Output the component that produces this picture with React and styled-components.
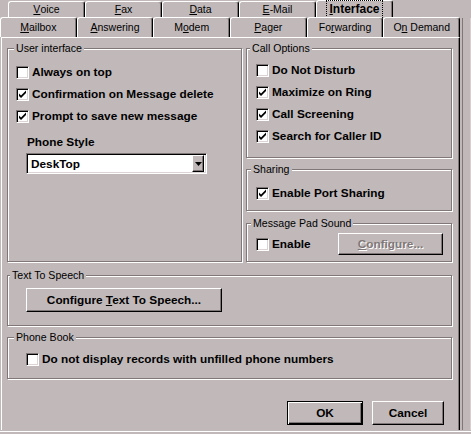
import React from 'react';
import styled, { createGlobalStyle } from 'styled-components';

const BG = '#c1b9b9';
const SHADE = '#807878';
const LIGHT = '#dcd4d4';

const GlobalStyle = createGlobalStyle`
  html, body {
    margin: 0;
    padding: 0;
    background: ${BG};
  }
  body {
    font-family: "Liberation Sans", Arial, sans-serif;
    color: #000;
  }
`;

const Page = styled.div`
  position: relative;
  width: 471px;
  height: 434px;
  overflow: hidden;
  background: ${BG};
`;

const Main = styled.div`
  display: flex;
  align-items: flex-start;
`;

const Dialog = styled.div`
  width: 460px;
`;

const SideStrip = styled.div`
  box-sizing: border-box;
  width: 9px;
  height: 412px;
  margin-top: 18px;
  margin-left: 2px;
  border-left: 1px solid ${SHADE};
  border-right: 1px solid #d8d0d0;
`;

const BottomLine = styled.div`
  height: 1px;
  margin-top: 1px;
  background: #fff;
`;

/* tabs */
const BackRow = styled.div`
  display: flex;
  align-items: flex-end;
  height: 18px;
  padding-left: 8px;
`;

const FrontRow = styled.div`
  display: flex;
  height: 20px;
  margin-top: -1px;
  position: relative;
`;

const Tab = styled.div`
  box-sizing: border-box;
  flex: ${p => (p.$w ? `0 0 ${p.$w}px` : '1 1 0')};
  height: ${p => p.$h}px;
  border-top: 1px solid #fff;
  border-left: 1px solid #fff;
  border-right: 1px solid #000;
  border-radius: 3px 3px 0 0;
  box-shadow: inset -1px 0 0 ${SHADE};
  background: ${BG};
  display: flex;
  align-items: center;
  justify-content: center;
  font-size: ${p => (p.$active ? '12px' : '10.5px')};
  font-weight: ${p => (p.$active ? 'bold' : 'normal')};
  padding-bottom: ${p => p.$pb || 0}px;
  white-space: pre;
`;

const Focus = styled.span`
  outline: 1px dotted #000;
  outline-offset: 1px;
  padding: 0 1px;
`;

const U = styled.span`
  text-decoration: underline;
  text-underline-offset: 1px;
`;

/* panel */
const Panel = styled.div`
  box-sizing: border-box;
  width: 459px;
  height: 393px;
  margin-left: 1px;
  border-top: 1px solid #fff;
  border-left: 1px solid #fff;
  border-right: 1px solid #000;
  box-shadow: inset -1px 0 0 ${SHADE};
  padding: 10px 7px 0 5px;
  display: flex;
  flex-direction: column;
`;

const TopGrid = styled.div`
  display: grid;
  grid-template-columns: 235px 206px;
  column-gap: 4px;
`;

const RightCol = styled.div`
  display: flex;
  flex-direction: column;
`;

const Group = styled.div`
  position: relative;
  box-sizing: border-box;
  height: ${p => p.$h}px;
  margin-top: ${p => p.$mt || 0}px;
  border: 1px solid ${SHADE};
  box-shadow: inset 1px 1px 0 #fff, 1px 1px 0 #fff;
  padding: ${p => p.$pad};
`;

const Legend = styled.span`
  position: absolute;
  top: -7px;
  left: ${p => p.$lx}px;
  padding: 0 2px;
  background: ${BG};
  font-size: 10.6px;
  line-height: 13px;
  white-space: nowrap;
`;

const CheckRow = styled.div`
  display: flex;
  align-items: center;
  gap: 3px;
  height: 22px;
  font-size: 11.8px;
  font-weight: bold;
  white-space: nowrap;
`;

const Box = styled.span`
  box-sizing: border-box;
  flex: 0 0 13px;
  width: 13px;
  height: 13px;
  background: #fff;
  border-top: 1px solid ${SHADE};
  border-left: 1px solid ${SHADE};
  border-bottom: 1px solid #fff;
  border-right: 1px solid #fff;
  box-shadow: inset 1px 1px 0 #000, inset -1px -1px 0 ${LIGHT};
  display: flex;
  align-items: center;
  justify-content: center;
`;

const StyleField = styled.div`
  padding-left: 10px;
`;

const FieldLabel = styled.div`
  margin: 8px 0 0 1px;
  height: 14px;
  line-height: 14px;
  font-size: 11.8px;
  font-weight: bold;
`;

const Select = styled.div`
  box-sizing: border-box;
  width: 181px;
  height: 21px;
  margin-top: 4px;
  background: #fff;
  border-top: 1px solid ${SHADE};
  border-left: 1px solid ${SHADE};
  border-bottom: 1px solid #fff;
  border-right: 1px solid #fff;
  box-shadow: inset 1px 1px 0 #000, inset -1px -1px 0 ${LIGHT};
  display: flex;
  align-items: center;
  justify-content: space-between;
  padding: 0 2px 0 4px;
  font-size: 11.8px;
  font-weight: bold;
`;

const ArrowButton = styled.span`
  box-sizing: border-box;
  width: 12px;
  height: 17px;
  background: ${BG};
  border-top: 1px solid #fff;
  border-left: 1px solid #fff;
  border-right: 1px solid #000;
  border-bottom: 1px solid #000;
  box-shadow: inset -1px -1px 0 ${SHADE};
  display: flex;
  align-items: center;
  justify-content: center;
`;

const Button = styled.button`
  box-sizing: border-box;
  width: ${p => p.$w}px;
  height: ${p => p.$h}px;
  margin: 0;
  padding: 0;
  background: ${BG};
  font-family: "Liberation Sans", Arial, sans-serif;
  font-size: 11.8px;
  font-weight: bold;
  color: ${p => (p.disabled ? SHADE : '#000')};
  text-shadow: ${p => (p.disabled ? '1px 1px 0 #fff' : 'none')};
  border: 1px solid;
  border-color: ${p => (p.$default ? '#000' : '#fff #000 #000 #fff')};
  box-shadow: ${p =>
    p.$default
      ? `inset 1px 1px 0 #fff, inset -1px -1px 0 #000, inset -2px -2px 0 ${SHADE}`
      : `inset -1px -1px 0 ${SHADE}`};
`;

const PadRow = styled.div`
  display: flex;
  align-items: center;
  justify-content: space-between;
  height: 22px;
`;

const ButtonRow = styled.div`
  display: flex;
  justify-content: flex-end;
  gap: 9px;
  margin-top: 22px;
  padding-right: 8px;
`;

function Check({ checked, children }) {
  return (
    <CheckRow>
      <Box>
        {checked && (
          <svg width="9" height="9" viewBox="0 0 9 9">
            <path d="M1 3.5 L3 5.5 L8 0.5 L8 3 L3 8 L1 6 Z" fill="#000" />
          </svg>
        )}
      </Box>
      <span>{children}</span>
    </CheckRow>
  );
}

export default function App() {
  return (
    <Page>
      <GlobalStyle />
      <Main>
        <Dialog>
          <BackRow>
            <Tab $w={77} $h={17} $pb={2}><U>V</U>oice</Tab>
            <Tab $w={77} $h={17} $pb={2}><U>F</U>ax</Tab>
            <Tab $w={77} $h={17} $pb={2}><U>D</U>ata</Tab>
            <Tab $w={77} $h={17} $pb={2}><U>E</U>-Mail</Tab>
            <Tab $w={77} $h={18} $pb={2} $active>
              <Focus><U>I</U>nterface</Focus>
            </Tab>
          </BackRow>
          <FrontRow>
            <Tab $h={20} $pb={1}><U>M</U>ailbox</Tab>
            <Tab $h={20} $pb={1}><U>A</U>nswering</Tab>
            <Tab $h={20} $pb={1}>M<U>o</U>dem</Tab>
            <Tab $h={20} $pb={1}><U>P</U>ager</Tab>
            <Tab $h={20} $pb={1}>Fo<U>r</U>warding</Tab>
            <Tab $h={20} $pb={1}>O<U>n</U>{' Demand'}</Tab>
          </FrontRow>
          <Panel>
            <TopGrid>
              <Group $h={214} $pad="12px 0 0 8px">
                <Legend $lx={6}>User interface</Legend>
                <Check>Always on top</Check>
                <Check checked>Confirmation on Message delete</Check>
                <Check checked>Prompt to save new message</Check>
                <StyleField>
                  <FieldLabel>Phone Style</FieldLabel>
                  <Select>
                    <span>DeskTop</span>
                    <ArrowButton>
                      <svg width="7" height="4" viewBox="0 0 7 4">
                        <path d="M0 0 H7 L3.5 4 Z" fill="#000" />
                      </svg>
                    </ArrowButton>
                  </Select>
                </StyleField>
              </Group>
              <RightCol>
                <Group $h={110} $pad="10px 0 0 9px">
                  <Legend $lx={3}>Call Options</Legend>
                  <Check>Do Not Disturb</Check>
                  <Check checked>Maximize on Ring</Check>
                  <Check checked>Call Screening</Check>
                  <Check checked>Search for Caller ID</Check>
                </Group>
                <Group $h={42} $mt={11} $pad="12px 0 0 9px">
                  <Legend $lx={4}>Sharing</Legend>
                  <Check checked>Enable Port Sharing</Check>
                </Group>
                <Group $h={39} $mt={12} $pad="9px 8px 0 9px">
                  <Legend $lx={4}>Message Pad Sound</Legend>
                  <PadRow>
                    <Check>Enable</Check>
                    <Button $w={105} $h={22} disabled>
                      <U>C</U>onfigure...
                    </Button>
                  </PadRow>
                </Group>
              </RightCol>
            </TopGrid>
            <Group $h={51} $mt={13} $pad="12px 0 0 18px">
              <Legend $lx={2}>Text To Speech</Legend>
              <Button $w={196} $h={24}>
                Configure <U>T</U>ext To Speech...
              </Button>
            </Group>
            <Group $h={42} $mt={11} $pad="10px 0 0 18px">
              <Legend $lx={6}>Phone Book</Legend>
              <Check>Do not display records with unfilled phone numbers</Check>
            </Group>
            <ButtonRow>
              <Button $w={76} $h={24} $default>OK</Button>
              <Button $w={72} $h={24}>Cancel</Button>
            </ButtonRow>
          </Panel>
        </Dialog>
        <SideStrip />
      </Main>
      <BottomLine />
    </Page>
  );
}
